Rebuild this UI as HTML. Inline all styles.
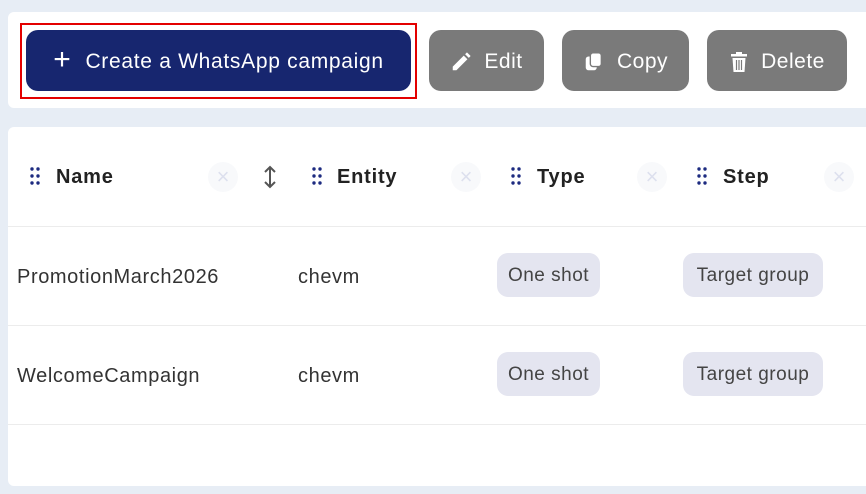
<!DOCTYPE html>
<html><head><meta charset="utf-8"><style>
*{box-sizing:border-box;margin:0;padding:0}
body{width:866px;height:494px;background:#e7edf5;font-family:"Liberation Sans",sans-serif;position:relative;overflow:hidden}
.card{position:absolute;background:#fff;border-radius:6px}
.btn{position:absolute;top:30px;height:61px;border-radius:12px;color:#fff;font-size:21px;letter-spacing:0.5px;display:flex;align-items:center;justify-content:center;gap:12px;background:#7a7a7a;padding-top:2px}
.hdr{position:absolute;top:166px;font-size:20px;font-weight:bold;color:#222;letter-spacing:0.8px}
.dots{position:absolute;top:167px;width:10px;height:18px}
.x{position:absolute;top:162px;width:30px;height:30px;border-radius:50%;background:#f8f9fb;color:#dde0ee;font-size:22px;text-align:center;line-height:30px}
.line{position:absolute;left:8px;right:0;height:1px;background:#ececec}
.cell{position:absolute;font-size:20px;color:#333;letter-spacing:0.6px}
.chip{position:absolute;height:44px;border-radius:11px;background:#e4e5f0;color:#444;font-size:19px;letter-spacing:0.5px;line-height:46px;text-align:center}
</style></head><body>
<div class="card" style="left:8px;top:12px;width:870px;height:96px"></div>
<div style="position:absolute;left:20px;top:23px;width:397px;height:76px;border:2px solid #e30000"></div>
<div class="btn" style="left:26px;width:385px;background:#17266f;gap:14px;letter-spacing:0.7px"><span style="font-size:30px;font-weight:300;margin-top:-4px">+</span>Create a WhatsApp campaign</div>
<div class="btn" style="left:429px;width:115px"><svg width="22" height="22" viewBox="0 0 24 24"><path d="M3 21v-4L15 5l4 4L7 21z M16.5 3.5l2-2 4 4-2 2z" fill="#fff"/></svg>Edit</div>
<div class="btn" style="left:562px;width:127px"><svg width="22" height="22" viewBox="0 0 24 24"><rect x="3" y="6" width="12" height="15" rx="3" fill="#fff"/><rect x="8" y="2" width="12" height="15" rx="3" fill="#fff" stroke="#7a7a7a" stroke-width="1.5"/></svg>Copy</div>
<div class="btn" style="left:707px;width:140px"><svg width="20" height="22" viewBox="0 0 20 22"><rect x="2" y="3" width="16" height="2.5" fill="#fff"/><rect x="7" y="1" width="6" height="3" fill="#fff"/><path d="M3.5 7h13l-1 14h-11z" fill="#fff"/><path d="M7.5 9v10M10 9v10M12.5 9v10" stroke="#7a7a7a" stroke-width="1.2"/></svg>Delete</div>

<div class="card" style="left:8px;top:127px;width:870px;height:359px"></div>
<svg class="dots" style="left:30px" viewBox="0 0 10 18"><g fill="#1d2b80"><circle cx="2" cy="2" r="1.7"/><circle cx="8" cy="2" r="1.7"/><circle cx="2" cy="9" r="1.7"/><circle cx="8" cy="9" r="1.7"/><circle cx="2" cy="16" r="1.7"/><circle cx="8" cy="16" r="1.7"/></g></svg>
<div class="hdr" style="left:56px">Name</div>
<div class="x" style="left:208px">×</div>
<svg style="position:absolute;left:262px;top:165px" width="16" height="24" viewBox="0 0 16 24"><path d="M8 2v20M3 7l5-5 5 5M3 17l5 5 5-5" stroke="#555" stroke-width="2" fill="none"/></svg>
<svg class="dots" style="left:312px" viewBox="0 0 10 18"><g fill="#1d2b80"><circle cx="2" cy="2" r="1.7"/><circle cx="8" cy="2" r="1.7"/><circle cx="2" cy="9" r="1.7"/><circle cx="8" cy="9" r="1.7"/><circle cx="2" cy="16" r="1.7"/><circle cx="8" cy="16" r="1.7"/></g></svg>
<div class="hdr" style="left:337px">Entity</div>
<div class="x" style="left:451px">×</div>
<svg class="dots" style="left:511px" viewBox="0 0 10 18"><g fill="#1d2b80"><circle cx="2" cy="2" r="1.7"/><circle cx="8" cy="2" r="1.7"/><circle cx="2" cy="9" r="1.7"/><circle cx="8" cy="9" r="1.7"/><circle cx="2" cy="16" r="1.7"/><circle cx="8" cy="16" r="1.7"/></g></svg>
<div class="hdr" style="left:537px">Type</div>
<div class="x" style="left:637px">×</div>
<svg class="dots" style="left:697px" viewBox="0 0 10 18"><g fill="#1d2b80"><circle cx="2" cy="2" r="1.7"/><circle cx="8" cy="2" r="1.7"/><circle cx="2" cy="9" r="1.7"/><circle cx="8" cy="9" r="1.7"/><circle cx="2" cy="16" r="1.7"/><circle cx="8" cy="16" r="1.7"/></g></svg>
<div class="hdr" style="left:723px">Step</div>
<div class="x" style="left:824px">×</div>

<div class="line" style="top:226px"></div>
<div class="line" style="top:325px"></div>
<div class="line" style="top:424px"></div>

<div class="cell" style="left:17px;top:266px">PromotionMarch2026</div>
<div class="cell" style="left:298px;top:266px">chevm</div>
<div class="chip" style="left:497px;top:253px;width:103px">One shot</div>
<div class="chip" style="left:683px;top:253px;width:140px">Target group</div>

<div class="cell" style="left:17px;top:365px">WelcomeCampaign</div>
<div class="cell" style="left:298px;top:365px">chevm</div>
<div class="chip" style="left:497px;top:352px;width:103px">One shot</div>
<div class="chip" style="left:683px;top:352px;width:140px">Target group</div>
</body></html>
